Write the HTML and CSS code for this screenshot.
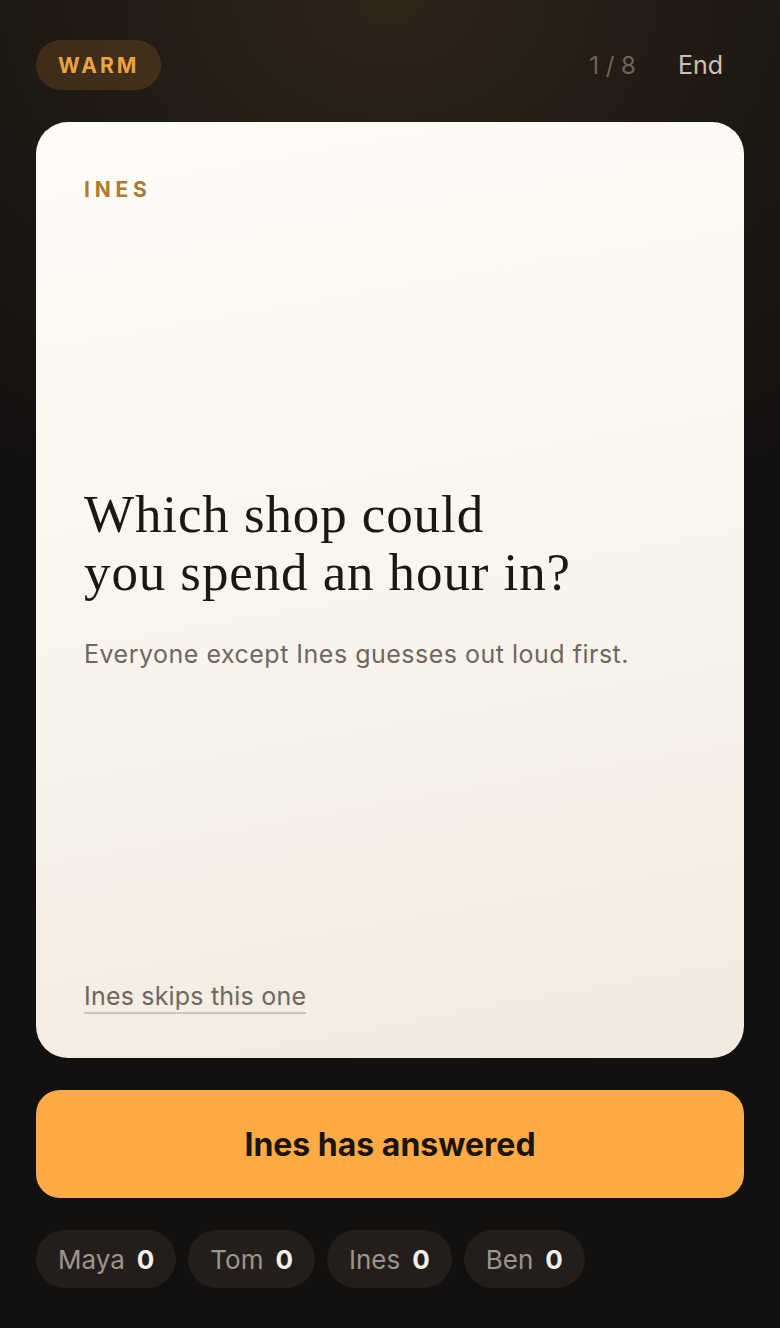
FILE: index.html
```html
<!DOCTYPE html>
<html>

    <head>
        <title>Warm round</title>
        <link rel="stylesheet" href="styles.css">
    </head>

    <body>
        <div class="screen">
            <header class="topbar">
                <span class="mood">WARM</span>
                <div class="progress">
                    <span class="count">1 / 8</span>
                    <button class="end">End</button>
                </div>
            </header>

            <main class="card">
                <div class="asker">INES</div>
                <div class="prompt">
                    <h1>Which shop could<br>you spend an hour in?</h1>
                    <p class="hint">Everyone except Ines guesses out loud first.</p>
                </div>
                <a class="skip" href="#">Ines skips this one</a>
            </main>

            <button class="answered">Ines has answered</button>

            <div class="scores">
                <span class="chip">Maya <b>0</b></span>
                <span class="chip">Tom <b>0</b></span>
                <span class="chip">Ines <b>0</b></span>
                <span class="chip">Ben <b>0</b></span>
            </div>
        </div>
    </body>

</html>
```

FILE: styles.css
```css
html,
body {
    margin: 0;
    height: 100%;
}

body {
    font-family: Inter, "Noto Sans", sans-serif;
    background: radial-gradient(ellipse 90% 40% at 50% 0%, #2f2418 0%, #1c1712 60%, #131110 100%);
    background-color: #131110;
    color: #e0d8ce;
}

.screen {
    box-sizing: border-box;
    height: 1328px;
    padding: 40px 36px 40px;
    display: flex;
    flex-direction: column;
}

.topbar {
    display: flex;
    align-items: center;
    justify-content: space-between;
    height: 50px;
}

.mood {
    display: inline-flex;
    align-items: center;
    height: 50px;
    padding: 0 22px 0 22px;
    border-radius: 25px;
    background: rgba(226, 150, 60, 0.16);
    color: #eda33e;
    font-size: 21px;
    font-weight: 700;
    letter-spacing: 3px;
}

.progress {
    display: flex;
    align-items: center;
    gap: 42px;
    padding-right: 21px;
}

.count {
    color: #6c645b;
    font-size: 24px;
}

.end {
    background: none;
    border: none;
    padding: 0;
    color: #cbc2b7;
    font-family: inherit;
    font-size: 25px;
    cursor: pointer;
}

.card {
    margin-top: 32px;
    flex: 1;
    display: flex;
    flex-direction: column;
    padding: 55px 48px 44px;
    border-radius: 32px;
    background: linear-gradient(170deg, #fefcf7 0%, #f9f5ee 50%, #f1eadf 100%);
    color: #1d1914;
}

.asker {
    color: #b27a2c;
    font-size: 21px;
    font-weight: 700;
    letter-spacing: 4.8px;
    line-height: 26px;
}

.prompt {
    flex: 1;
    display: flex;
    flex-direction: column;
    justify-content: center;
    padding-bottom: 30px;
}

.prompt h1 {
    margin: 0;
    font-family: "Liberation Serif", "DejaVu Serif", serif;
    font-weight: 400;
    font-size: 53px;
    line-height: 58px;
    letter-spacing: 0.9px;
    color: #1b1712;
}

.hint {
    margin: 38px 0 0;
    font-size: 25px;
    letter-spacing: 0.5px;
    color: #6f675e;
}

.skip {
    align-self: flex-start;
    color: #6f675e;
    font-size: 25px;
    letter-spacing: 0.2px;
    text-decoration: none;
    border-bottom: 2px solid #cdc5b8;
    padding-bottom: 1px;
}

.answered {
    margin-top: 32px;
    height: 108px;
    border: none;
    border-radius: 24px;
    background: #ffab45;
    color: #1a140d;
    font-family: inherit;
    font-size: 32px;
    font-weight: 700;
    cursor: pointer;
}

.scores {
    margin-top: 32px;
    display: flex;
    gap: 12px;
}

.chip {
    display: inline-flex;
    align-items: center;
    gap: 12px;
    height: 58px;
    padding: 0 22px;
    border-radius: 29px;
    background: #221e1b;
    color: #9d958c;
    font-size: 26px;
}

.chip b {
    color: #f4efe8;
    font-weight: 700;
}
```
